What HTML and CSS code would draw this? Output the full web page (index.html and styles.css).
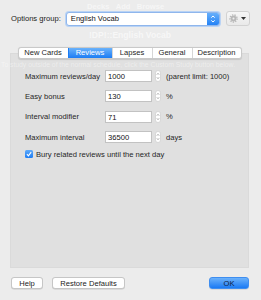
FILE: index.html
```html
<!doctype html>
<html lang="en">
  <head>
    <meta charset="UTF-8" />
    <meta name="viewport" content="width=device-width, initial-scale=1.0" />
    <title>Options</title>
    <link rel="stylesheet" href="styles.css">
  </head>
  <body>
    <div class="dialog">
      <div class="options-row">
        <span class="options-label">Options group:</span>
        <div class="select">
          <span class="select-value">English Vocab</span>
          <span class="select-arrows">
            <svg width="12" height="14" viewBox="0 0 12 14">
              <path d="M4.3 5.6 L6 4 L7.7 5.6" fill="none" stroke="#fff" stroke-width="1" />
              <path d="M4.3 8.4 L6 10 L7.7 8.4" fill="none" stroke="#fff" stroke-width="1" />
            </svg>
          </span>
        </div>
        <button class="gear-btn">
          <svg width="9" height="9" viewBox="0 0 9 9">
            <circle cx="4.5" cy="4.5" r="3.6" fill="none" stroke="#b8b8b8" stroke-width="1.4" stroke-dasharray="1.3 1.2" />
            <circle cx="4.5" cy="4.5" r="2.9" fill="#b8b8b8" />
            <circle cx="4.5" cy="4.5" r="1" fill="#eee" />
          </svg>
          <svg width="5" height="3" viewBox="0 0 5 3">
            <path d="M0 0 L5 0 L2.5 3 Z" fill="#333" />
          </svg>
        </button>
      </div>

      <div class="tabview">
        <div class="tabs">
          <span class="tab">New Cards</span>
          <span class="tab active">Reviews</span>
          <span class="tab">Lapses</span>
          <span class="tab">General</span>
          <span class="tab">Description</span>
        </div>

        <div class="panel">
          <div class="field-row">
            <span class="field-label">Maximum reviews/day</span>
            <span class="spin-input">1000</span>
            <span class="stepper">
              <svg width="6" height="12" viewBox="0 0 6 12">
                <rect x="0.5" y="0.5" width="5" height="11" rx="2.5" fill="#fff" stroke="#c8c8c8" stroke-width="0.6" />
                <path d="M1.9 4.6 L3 3.4 L4.1 4.6" fill="none" stroke="#777" stroke-width="0.7" />
                <path d="M1.9 7.4 L3 8.6 L4.1 7.4" fill="none" stroke="#777" stroke-width="0.7" />
              </svg>
            </span>
            <span class="field-suffix">(parent limit: 1000)</span>
          </div>
          <div class="field-row">
            <span class="field-label">Easy bonus</span>
            <span class="spin-input">130</span>
            <span class="stepper">
              <svg width="6" height="12" viewBox="0 0 6 12">
                <rect x="0.5" y="0.5" width="5" height="11" rx="2.5" fill="#fff" stroke="#c8c8c8" stroke-width="0.6" />
                <path d="M1.9 4.6 L3 3.4 L4.1 4.6" fill="none" stroke="#777" stroke-width="0.7" />
                <path d="M1.9 7.4 L3 8.6 L4.1 7.4" fill="none" stroke="#777" stroke-width="0.7" />
              </svg>
            </span>
            <span class="field-suffix">%</span>
          </div>
          <div class="field-row">
            <span class="field-label">Interval modifier</span>
            <span class="spin-input">71</span>
            <span class="stepper">
              <svg width="6" height="12" viewBox="0 0 6 12">
                <rect x="0.5" y="0.5" width="5" height="11" rx="2.5" fill="#fff" stroke="#c8c8c8" stroke-width="0.6" />
                <path d="M1.9 4.6 L3 3.4 L4.1 4.6" fill="none" stroke="#777" stroke-width="0.7" />
                <path d="M1.9 7.4 L3 8.6 L4.1 7.4" fill="none" stroke="#777" stroke-width="0.7" />
              </svg>
            </span>
            <span class="field-suffix">%</span>
          </div>
          <div class="field-row">
            <span class="field-label">Maximum interval</span>
            <span class="spin-input">36500</span>
            <span class="stepper">
              <svg width="6" height="12" viewBox="0 0 6 12">
                <rect x="0.5" y="0.5" width="5" height="11" rx="2.5" fill="#fff" stroke="#c8c8c8" stroke-width="0.6" />
                <path d="M1.9 4.6 L3 3.4 L4.1 4.6" fill="none" stroke="#777" stroke-width="0.7" />
                <path d="M1.9 7.4 L3 8.6 L4.1 7.4" fill="none" stroke="#777" stroke-width="0.7" />
              </svg>
            </span>
            <span class="field-suffix">days</span>
          </div>
          <label class="check-row">
            <span class="checkbox">
              <svg width="8" height="8" viewBox="0 0 8 8">
                <path d="M1.9 4.2 L3.4 5.8 L6.2 2.2" fill="none" stroke="#fff" stroke-width="1.1" />
              </svg>
            </span>
            Bury related reviews until the next day
          </label>
        </div>
      </div>

      <div class="button-row">
        <button class="btn">Help</button>
        <button class="btn btn-restore">Restore Defaults</button>
        <button class="btn btn-primary">OK</button>
      </div>
    </div>

    <!-- main window showing through behind the sheet -->
    <div class="ghost ghost-menu">Decks&nbsp;&nbsp;&nbsp;Add&nbsp;&nbsp;&nbsp;Browse</div>
    <div class="ghost ghost-title">!DP!::English Vocab</div>
    <div class="ghost ghost-info">To study outside of the normal schedule, click the Custom Study button below.</div>
  </body>
</html>
```

FILE: styles.css
```css
* {
  margin: 0;
  padding: 0;
  box-sizing: border-box;
}

body {
  font-family: 'Liberation Sans', Arial, sans-serif;
  font-size: 7.6px;
  color: #262626;
  background: #ececec;
  width: 261px;
  height: 300px;
  overflow: hidden;
  position: relative;
}

.dialog {
  height: 300px;
  display: flex;
  flex-direction: column;
  padding: 11px 12px 0 10px;
}

/* options group */
.options-row {
  display: flex;
  align-items: center;
  height: 15px;
}

.options-label {
  margin-left: 1px;
  white-space: nowrap;
  color: #222;
}

.select {
  margin-left: 5px;
  width: 154px;
  flex-shrink: 0;
  height: 14px;
  display: flex;
  align-items: center;
  background: #fff;
  border: 1px solid #8fb6ec;
  border-radius: 3px;
  box-shadow: 0 0 0 1px #b9d3f5;
  overflow: hidden;
}

.select-value {
  flex: 1;
  padding-left: 4px;
  color: #111;
}

.select-arrows {
  width: 12px;
  height: 14px;
  display: flex;
  background: linear-gradient(#6cb3fb, #1f7ff5);
}

.gear-btn {
  margin-left: 6px;
  width: 24px;
  height: 15px;
  flex-shrink: 0;
  display: flex;
  align-items: center;
  justify-content: center;
  gap: 3px;
  background: linear-gradient(#f6f6f6, #e9e9e9);
  border: 1px solid #d2d2d2;
  border-radius: 3px;
}

/* tab view */
.tabview {
  margin-top: 21px;
  display: flex;
  flex-direction: column;
}

.tabs {
  align-self: center;
  display: grid;
  grid-template-columns: 49px 44px 40px 40px 49px;
  height: 12px;
  margin-bottom: -6px;
  position: relative;
  z-index: 1;
  background: #fff;
  border: 1px solid #c9c9c9;
  border-radius: 3px;
  box-shadow: 0 0.5px 1px rgba(0, 0, 0, 0.12);
  overflow: hidden;
}

.tab {
  text-align: center;
  line-height: 10px;
  color: #1e1e1e;
  border-left: 1px solid #d6d6d6;
}

.tab:first-child {
  border-left: none;
}

.tab.active {
  background: linear-gradient(#6ab2fb, #1b7cf4);
  color: #fff;
  border-left-color: #1b7cf4;
}

.panel {
  height: 215px;
  background: #e0e0e0;
  border: 1px solid #dadada;
  padding: 16px 0 0 14px;
}

.field-row {
  display: flex;
  align-items: center;
  height: 12px;
  margin-bottom: 8.4px;
}

.field-label {
  width: 80px;
  color: #262626;
}

.spin-input {
  width: 47px;
  height: 12px;
  line-height: 11px;
  padding-left: 2px;
  background: #fff;
  border: 1px solid #c2c2c2;
  color: #111;
}

.stepper {
  margin-left: 3px;
  display: flex;
}

.field-suffix {
  margin-left: 5px;
}

.check-row {
  display: flex;
  align-items: center;
  gap: 3px;
  margin-top: -2px;
}

.checkbox {
  width: 8px;
  height: 8px;
  display: flex;
  border-radius: 1.5px;
  background: linear-gradient(#5eaafa, #1d7df4);
}

/* bottom buttons */
.button-row {
  margin-top: 9px;
  display: flex;
  align-items: center;
  height: 12px;
}

.btn {
  height: 12px;
  font-family: inherit;
  font-size: 7.6px;
  color: #222;
  background: #fff;
  border: 1px solid #c6c6c6;
  border-radius: 3px;
  box-shadow: 0 0.5px 0.5px rgba(0, 0, 0, 0.15);
}

.btn:first-child {
  margin-left: 1px;
  width: 32px;
}

.btn-restore {
  margin-left: 9px;
  width: 73px;
}

.btn-primary {
  margin-left: auto;
  width: 40px;
  background: linear-gradient(#6cb2fb, #1a7af4);
  border-color: #3f8ef0;
  color: #10233d;
}

/* faint text of the window behind */
.ghost {
  position: absolute;
  pointer-events: none;
  white-space: nowrap;
  color: rgba(255, 255, 255, 0.55);
}

.ghost-menu {
  top: 2px;
  left: 87px;
  font-weight: bold;
  font-size: 7.6px;
}

.ghost-title {
  top: 30px;
  left: 89px;
  font-weight: bold;
  font-size: 8.6px;
  color: rgba(255, 255, 255, 0.6);
}

.ghost-info {
  top: 61px;
  left: 1px;
  font-size: 6.9px;
  letter-spacing: -0.05px;
  color: rgba(255, 255, 255, 0.45);
}
```
